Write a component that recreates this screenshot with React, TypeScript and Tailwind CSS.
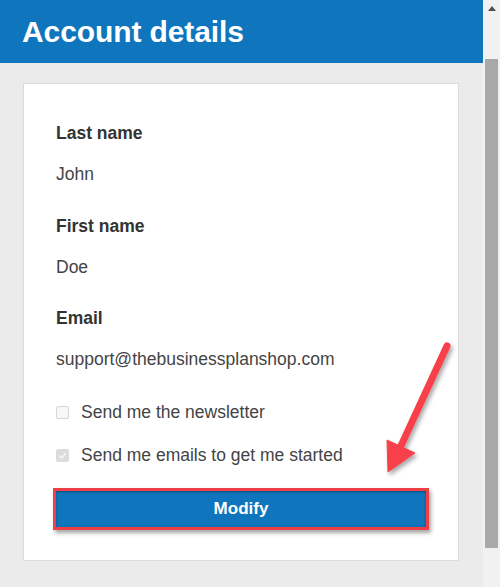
import React from "react";

function Arrow() {
  return (
    <svg
      className="pointer-events-none absolute left-0 top-0"
      width="500"
      height="587"
      viewBox="0 0 500 587"
    >
      <defs>
        <filter id="sh" x="-20%" y="-20%" width="140%" height="140%">
          <feDropShadow dx="2" dy="3" stdDeviation="2" floodColor="#000" floodOpacity="0.35" />
        </filter>
      </defs>
      <g filter="url(#sh)" fill="#f7414a" stroke="#f7414a">
        <line x1="447" y1="346" x2="400" y2="448" strokeWidth="7" strokeLinecap="round" />
        <polygon points="388,472 387,440 415,453" strokeWidth="1" strokeLinejoin="round" />
      </g>
    </svg>
  );
}

function Field({ label, value, gap }: { label: string; value: string; gap: string }) {
  return (
    <div className={gap}>
      <div className="h-6 text-[17.5px] font-bold leading-6 text-[#333]">{label}</div>
      <div className="mt-[17px] h-6 text-[17.5px] leading-6 text-[#444]">{value}</div>
    </div>
  );
}

export default function App() {
  return (
    <div
      className="relative flex h-[587px] w-[500px] overflow-hidden bg-[#ebebeb]"
      style={{ fontFamily: '"Liberation Sans", Arial, sans-serif' }}
    >
      <div className="flex w-[483px] flex-col">
        <header className="flex h-[63px] items-center bg-[#0f75bc] px-[22px]">
          <h1 className="text-[30px] font-bold leading-none tracking-[-0.1px] text-white">
            Account details
          </h1>
        </header>
        <div className="pl-[23px] pt-[20px]">
          <div className="h-[478px] w-[436px] border border-[#dcdcdc] bg-white pl-[32px] pt-[37px]">
            <Field label="Last name" value="John" gap="mb-[28px]" />
            <Field label="First name" value="Doe" gap="mb-[27px]" />
            <Field label="Email" value="support@thebusinessplanshop.com" gap="mb-[29px]" />
            <label className="flex h-6 items-center gap-[12px] text-[17.5px] text-[#444]">
              <span className="block h-[13px] w-[13px] rounded-[2px] border border-[#d6d6d6] bg-[#f7f7f7]" />
              Send me the newsletter
            </label>
            <label className="mt-[19px] flex h-6 items-center gap-[12px] text-[17.5px] text-[#444]">
              <span className="flex h-[13px] w-[13px] items-center justify-center rounded-[2px] bg-[#dcdcdc]">
                <svg width="11" height="11" viewBox="0 0 11 11">
                  <path d="M2 5.5 L4.5 8 L9 3" fill="none" stroke="#f5f5f5" strokeWidth="1.6" />
                </svg>
              </span>
              Send me emails to get me started
            </label>
            <div className="-ml-[3px] mt-[21px] w-[376px] border-[3px] border-[#ee3f47] shadow-[2px_3px_4px_rgba(0,0,0,0.35)]">
              <button className="flex h-[36px] w-full items-center justify-center bg-[#0f75bc] text-[17px] font-bold text-white shadow-[inset_0_1px_3px_rgba(0,0,0,0.35)]">
                Modify
              </button>
            </div>
          </div>
        </div>
      </div>
      <div className="relative h-full w-[17px] bg-[#f1f1f1]">
        <div className="flex h-[17px] items-center justify-center">
          <svg width="8" height="5" viewBox="0 0 8 5">
            <polygon points="0,5 4,0 8,5" fill="#505050" />
          </svg>
        </div>
        <div className="ml-[2px] mt-[42px] h-[489px] w-[13px] bg-[#a8a8a8]" />
      </div>
      <Arrow />
    </div>
  );
}
